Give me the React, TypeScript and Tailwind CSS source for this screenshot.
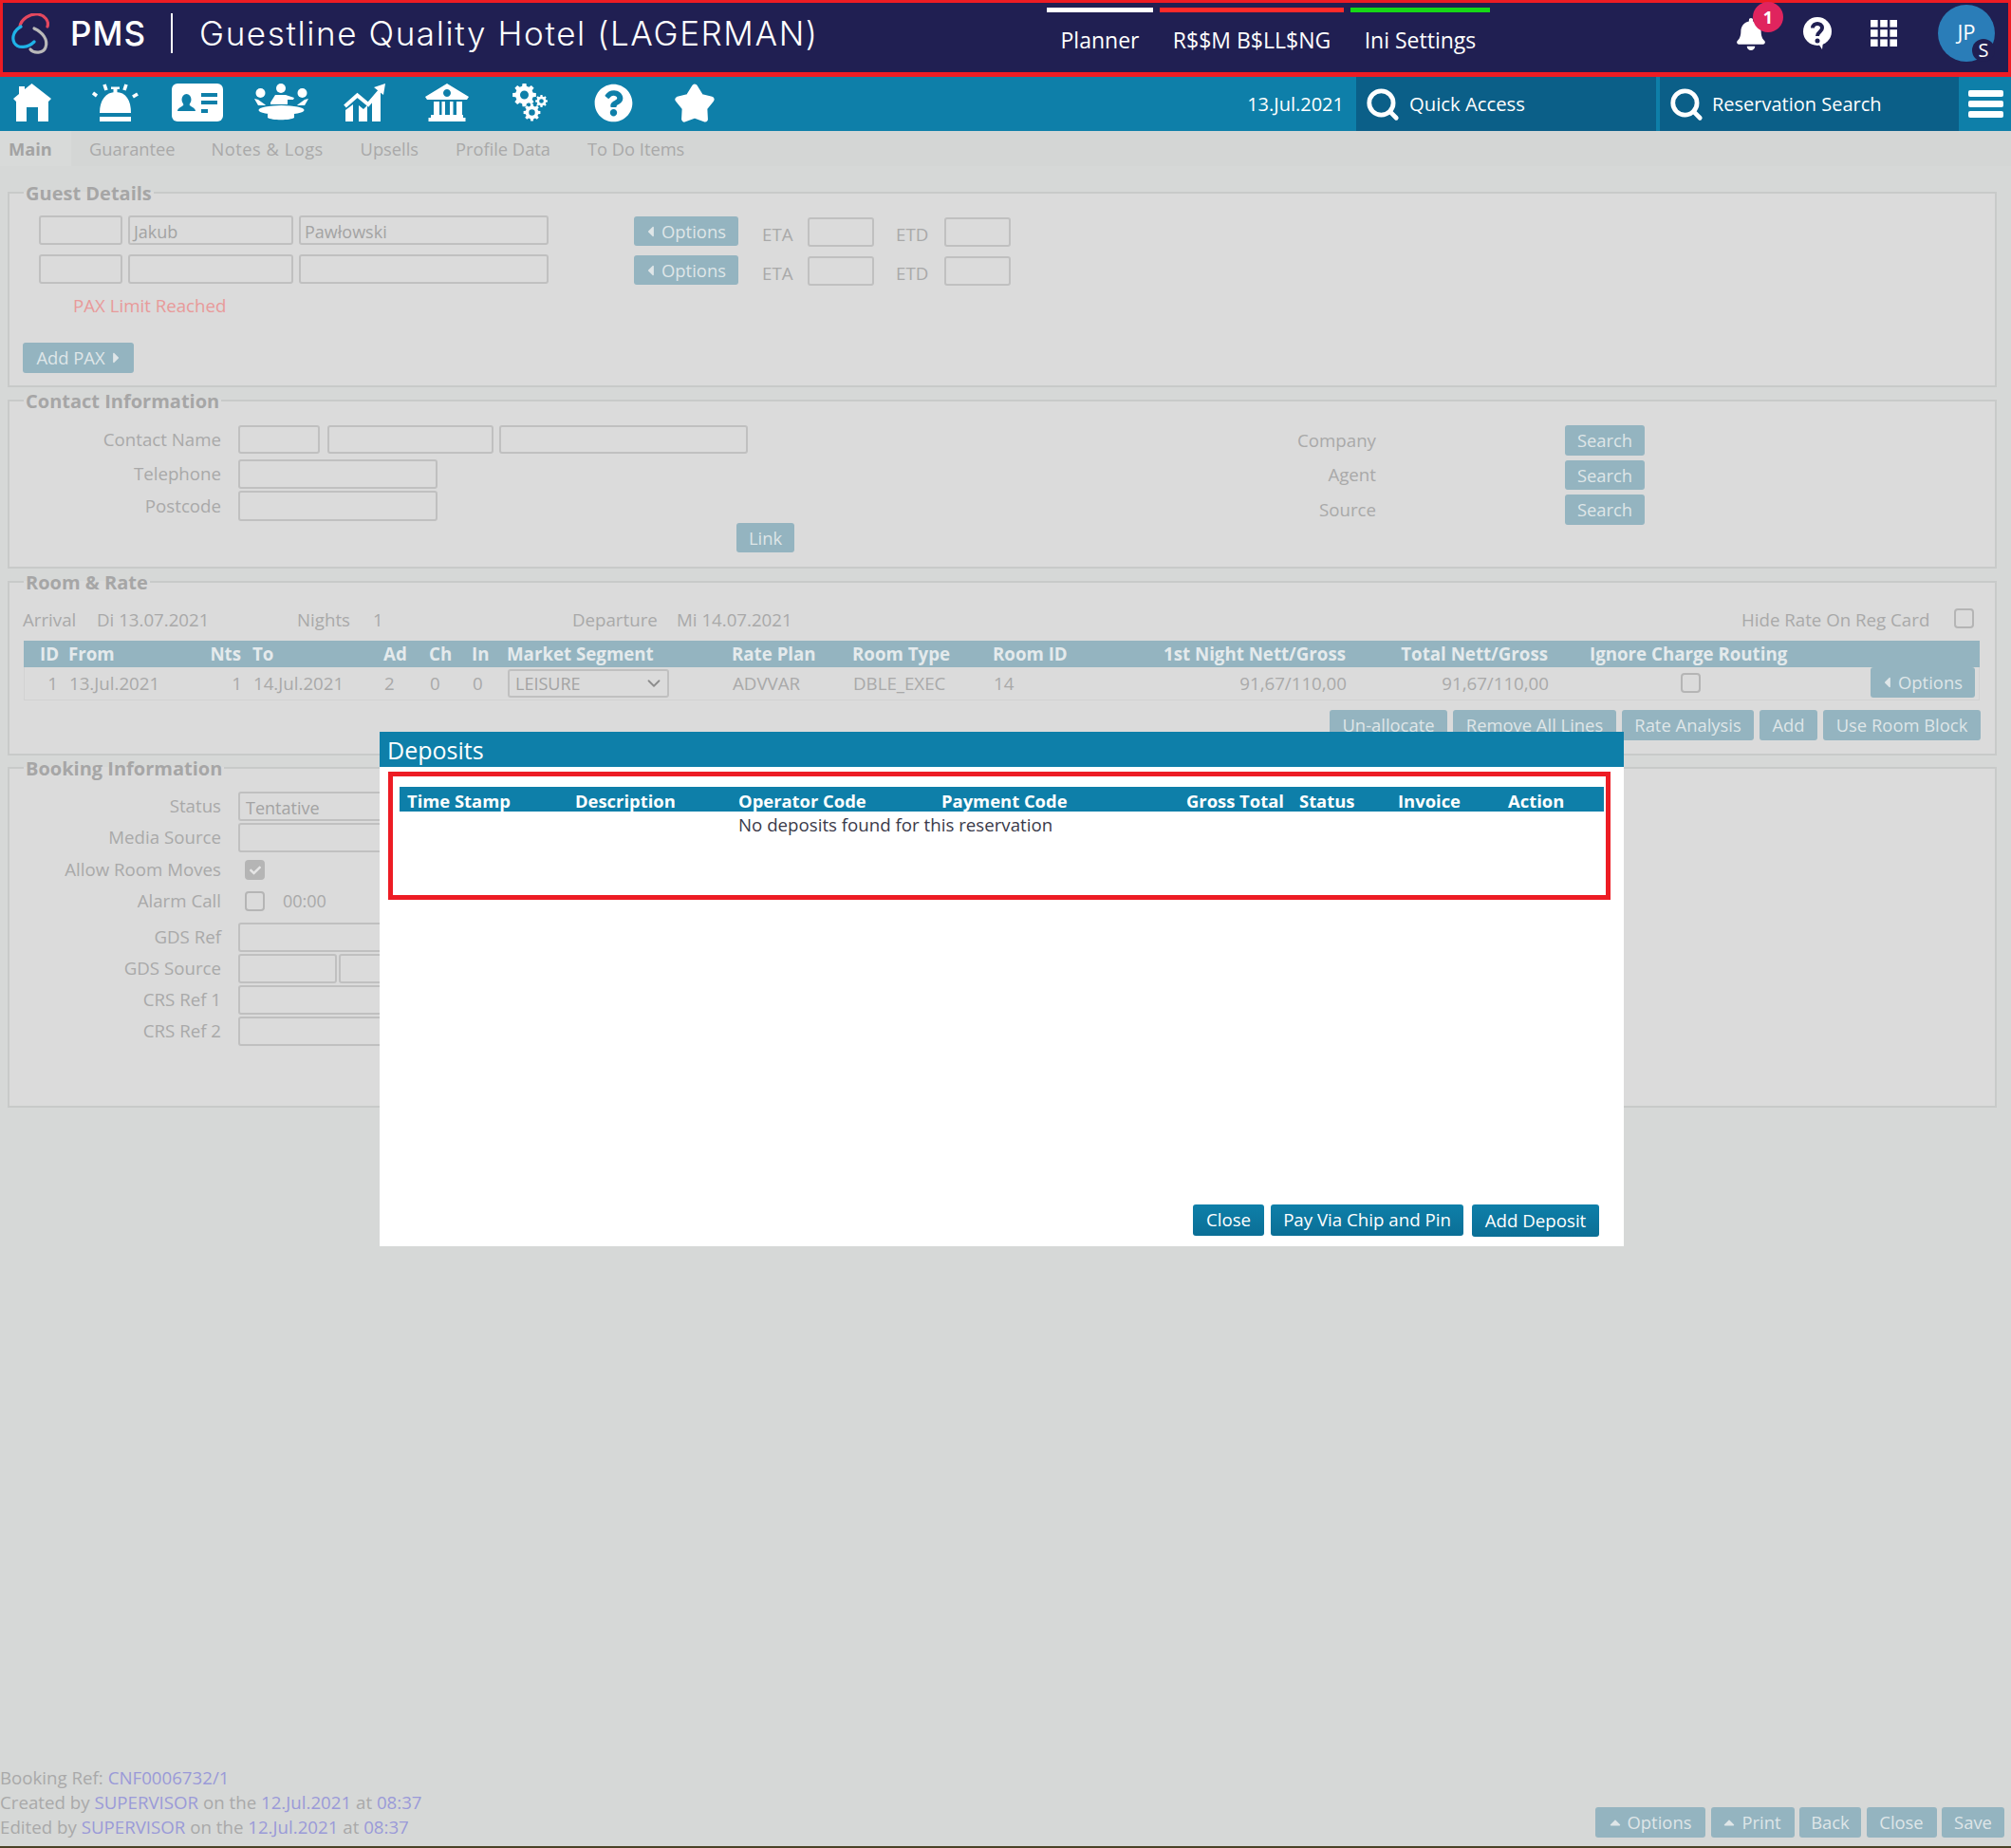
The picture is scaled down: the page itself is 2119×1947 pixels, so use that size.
import type { ReactNode } from 'react';
import {
  FaCaretLeft,
  FaCaretRight,
  FaCaretUp,
  FaCheck,
  FaQuestionCircle,
  FaBell,
} from 'react-icons/fa';
import { LuSearch, LuChevronDown } from 'react-icons/lu';

const tableCols =
  'grid grid-cols-[47px_138px_56px_138px_48px_45px_37px_237px_127px_148px_170px_202px_213px_339px_116px]';
const depositCols =
  'grid grid-cols-[177px_172px_214px_258px_119px_104px_116px_1fr]';

function Input({ className = '', children }: { className?: string; children?: ReactNode }) {
  return (
    <div
      className={`shrink-0 rounded-[3px] border-2 border-[#c0c0c0] bg-[#dbdbdb] px-1 text-[18px] leading-[30px] text-[#a3a3a3] ${className}`}
    >
      {children}
    </div>
  );
}

function Btn({ className = '', children }: { className?: string; children: ReactNode }) {
  return (
    <div
      className={`flex shrink-0 items-center justify-center gap-[7px] rounded-[3px] bg-[#94b4c0] text-[18.4px] text-[#dfe6e8] ${className}`}
    >
      {children}
    </div>
  );
}

function Check({ className = '', checked = false }: { className?: string; checked?: boolean }) {
  return (
    <div
      className={`flex h-[21px] w-[21px] shrink-0 items-center justify-center rounded-[4px] border-2 border-[#b5b5b5] ${
        checked ? 'bg-[#b5b5b5] text-[#e6e6e6]' : ''
      } ${className}`}
    >
      {checked && <FaCheck className="h-3 w-3" />}
    </div>
  );
}

function Section({ title, className = '', children }: { title: string; className?: string; children: ReactNode }) {
  return (
    <fieldset className={`ml-2 w-[2096px] border-2 border-[#c8cac9] bg-[#dbdbdb] p-0 ${className}`}>
      <legend className="ml-[15px] px-0.5 pt-[2px] text-[20px] font-bold leading-[26px] text-[#a6a6a6]">{title}</legend>
      {children}
    </fieldset>
  );
}

function FormRow({ label, className = '', children }: { label: string; className?: string; children?: ReactNode }) {
  return (
    <div className={`flex items-center ${className}`}>
      <div className="w-[223px] text-right text-[#a9a9a9]">{label}</div>
      <div className="ml-[18px] flex items-center">{children}</div>
    </div>
  );
}

function Logo() {
  return (
    <svg viewBox="0 0 40 44" className="h-[44px] w-[40px]" fill="none" strokeWidth="3.2" strokeLinecap="round">
      <path d="M9 14 C10 6 20 0 28 1 C35 2 40 8 38 14" stroke="#e5485f" />
      <path d="M10 14 C3 18 0 25 3 31 C7 38 18 36 24 30" stroke="#1fb3e8" />
      <path d="M24 16 C33 20 39 28 36 36 C34 42 24 43 20 38" stroke="#b9b9b9" />
    </svg>
  );
}

function Home() {
  return (
    <svg viewBox="0 0 41 40" className="h-[40px] w-[41px]" fill="#fff">
      <path d="M20.5 0 L41 16 L38 19 V40 H27 V25 H15 V40 H4 V19 L1 16 L7 11 V3 H13 V6 Z" />
    </svg>
  );
}

function ServiceBell() {
  return (
    <svg viewBox="0 0 50 40" className="h-[40px] w-[50px]" fill="#fff" stroke="none">
      <path d="M8 31 C8 18 14 9 25 9 C36 9 41 18 41 31 Z" />
      <rect x="22.5" y="4" width="4" height="6" />
      <rect x="20" y="3.5" width="9" height="2.5" />
      <rect x="8" y="35" width="33" height="5" />
      <path d="M1 10L5 13M13 1l2 6M36 1l-2 6M48 11l-5 3" stroke="#fff" strokeWidth="3.6" />
    </svg>
  );
}

function ContactCard() {
  return (
    <svg viewBox="0 0 54 40" className="h-[40px] w-[54px]">
      <rect width="54" height="40" rx="6" fill="#fff" />
      <g fill="#0e7fa9">
        <ellipse cx="15.5" cy="17" rx="5" ry="6" />
        <path d="M6 29 C6 25 12 25 13 21 H18 C19 25 25 25 25 29 Z" />
        <rect x="31" y="10" width="17" height="4" />
        <rect x="31" y="18" width="17" height="4" />
        <rect x="31" y="27" width="7" height="4" />
      </g>
    </svg>
  );
}

function Meeting() {
  return (
    <svg viewBox="0 0 57 40" className="h-[40px] w-[57px]" fill="#fff">
      <circle cx="6.5" cy="10" r="5" />
      <circle cx="28" cy="5" r="5" />
      <circle cx="50.5" cy="10" r="5" />
      <path d="M0 16 L4 17 L11 22 L12 23 H4 Z" />
      <path d="M57 16 L53 17 L46 22 L45 23 H53 Z" />
      <path d="M17 20 L22 12 H33 L42 15 L41 17 L35 17 L35 22 H17 Z" />
      <ellipse cx="28.5" cy="28" rx="24" ry="5" />
      <path d="M14 32 H42 V36 C38 39 18 39 14 36 Z" />
    </svg>
  );
}

function Growth() {
  return (
    <svg viewBox="0 0 44 40" className="h-[40px] w-[44px]" fill="#fff">
      <path d="M2 28 L10 22 V40 H2 Z" />
      <path d="M16 23 L21 27 L25 23 V40 H16 Z" />
      <path d="M30 17 L39 8 V40 H30 Z" />
      <path d="M1.5 24 L14.5 12.5 L26 22 L38 8" fill="none" stroke="#fff" strokeWidth="4" />
      <path d="M32 4 L44 0 L42 12 Z" />
    </svg>
  );
}

function Bank() {
  return (
    <svg viewBox="0 0 46 40" className="h-[40px] w-[46px]" fill="#fff">
      <path
        fillRule="evenodd"
        d="M23 0 L46 14 L44 17 H2 L0 14 Z M23 6 a4 4 0 1 0 0.01 0 Z"
      />
      <rect x="9" y="19" width="6" height="14" />
      <rect x="17.5" y="19" width="3.5" height="14" />
      <rect x="26" y="19" width="3.5" height="14" />
      <rect x="33" y="19" width="6" height="14" />
      <rect x="6" y="33" width="34" height="3" />
      <rect x="3.5" y="36" width="39" height="4" />
    </svg>
  );
}

function gearPath(cx: number, cy: number, r: number, teeth: number) {
  const pts: string[] = [];
  const step = (Math.PI * 2) / teeth;
  for (let i = 0; i < teeth; i++) {
    const a = i * step;
    [
      [-0.32, 0.76],
      [-0.2, 1],
      [0.2, 1],
      [0.32, 0.76],
    ].forEach(([da, rr]) => {
      const t = a + da * step;
      pts.push(`${(cx + Math.cos(t) * r * rr).toFixed(2)} ${(cy + Math.sin(t) * r * rr).toFixed(2)}`);
    });
  }
  const hole = r * 0.36;
  return `M${pts.join(' L')} Z M${cx - hole} ${cy} a${hole} ${hole} 0 1 0 ${hole * 2} 0 a${hole} ${hole} 0 1 0 ${-hole * 2} 0 Z`;
}

function Gears() {
  return (
    <svg viewBox="0 0 38 40" className="h-[40px] w-[38px]" fill="#fff" fillRule="evenodd">
      <path d={gearPath(12.5, 12, 12.5, 8)} />
      <path d={gearPath(30.5, 18.5, 6.5, 8)} />
      <path d={gearPath(20.5, 30.5, 9, 8)} />
    </svg>
  );
}

function RoundStar() {
  return (
    <svg viewBox="0 0 43 40" className="h-[41px] w-[44px]" fill="#fff" stroke="#fff" strokeWidth="6" strokeLinejoin="round">
      <path d="M21.5 3.5 L27.7 13.5 L38.6 16.4 L31.5 25.2 L32.1 36.6 L21.5 32.5 L10.9 36.6 L11.5 25.2 L4.4 16.4 L15.3 13.5 Z" />
    </svg>
  );
}

function HelpBubble() {
  return (
    <svg viewBox="0 0 30 34" className="h-[34px] w-[30px]">
      <circle cx="15" cy="15" r="15" fill="#fff" />
      <path d="M16 28 L20 34 L21 26 Z" fill="#fff" />
      <path d="M10 11.5 C10 5.5 20 5.5 20 11.5 C20 15.5 15 15.5 15 20" fill="none" stroke="#201f52" strokeWidth="4" />
      <circle cx="15" cy="25" r="2.5" fill="#201f52" />
    </svg>
  );
}

function AppsGrid() {
  const cells = [0, 10.2, 20.4];
  return (
    <svg viewBox="0 0 28 28" className="h-[28px] w-[28px]" fill="#fff">
      {cells.map((y) => cells.map((x) => <rect key={`${x}-${y}`} x={x} y={y} width="7.6" height="7.6" />))}
    </svg>
  );
}

const navIcons = [
  { key: 'home', ml: 'ml-[13px]', node: <Home /> },
  { key: 'bell', ml: 'ml-[43px]', node: <ServiceBell /> },
  { key: 'card', ml: 'ml-[34px]', node: <ContactCard /> },
  { key: 'meet', ml: 'ml-[33px]', node: <Meeting /> },
  { key: 'chart', ml: 'ml-[37px]', node: <Growth /> },
  { key: 'bank', ml: 'ml-[42px]', node: <Bank /> },
  { key: 'cogs', ml: 'ml-[46px]', node: <Gears /> },
  { key: 'help', ml: 'ml-[48px]', node: <FaQuestionCircle className="h-[41px] w-[41px]" /> },
  { key: 'star', ml: 'ml-[43px]', node: <RoundStar /> },
];

export default function App() {
  return (
    <div className="relative flex h-[1947px] w-[2119px] flex-col overflow-hidden bg-[#d6d8d7] font-['Open_Sans',sans-serif] text-[18.7px]">
      {/* top bar */}
      <header className="flex h-[81px] items-center border-[3px] border-b-[5px] border-[#ed1c24] bg-[#201f52] text-white">
        <div className="ml-[9px] flex h-[73px] items-start pt-[11px]">
          <Logo />
        </div>
        <div className="ml-[22px] mt-[-9px] font-['Inter',sans-serif] text-[35px] font-medium tracking-[1px]">PMS</div>
        <div className="ml-[26px] mt-[-9px] h-[42px] w-0.5 bg-white" />
        <div className="ml-[28px] mt-[-9px] whitespace-nowrap font-['Inter',sans-serif] text-[35px] font-light tracking-[1.6px]">
          Guestline Quality Hotel (LAGERMAN)
        </div>
        <nav className="absolute left-[1103px] top-[8px] flex gap-[7px] text-[23px] leading-[32px]">
          <div className="w-[112px] border-t-[5px] border-white pt-[13px] text-center">Planner</div>
          <div className="w-[194px] border-t-[5px] border-[#ff2a2a] pt-[13px] text-center">R$$M B$LL$NG</div>
          <div className="w-[147px] border-t-[5px] border-[#17d817] pt-[13px] text-center">Ini Settings</div>
        </nav>
        <div className="absolute left-[1830px] top-[19px]">
          <FaBell className="h-[34px] w-[30px]" />
          <div className="absolute left-[17px] top-[-17px] flex h-[32px] w-[32px] items-center justify-center rounded-full bg-[#e0245e] text-[18px] font-bold">
            1
          </div>
        </div>
        <div className="absolute left-[1900px] top-[18px]">
          <HelpBubble />
        </div>
        <div className="absolute left-[1971px] top-[21px]">
          <AppsGrid />
        </div>
        <div className="absolute left-[2042px] top-[5px] h-[60px] w-[60px] rounded-full bg-[#2a7db8] pt-[14px] text-center text-[22px] leading-[28px]">
          JP
          <div className="absolute left-[36px] top-[36px] flex h-[24px] w-[24px] items-center justify-center rounded-full bg-[#201f52] text-[20px]">
            S
          </div>
        </div>
      </header>

      {/* icon bar */}
      <div className="flex h-[57px] items-center bg-[#0e7fa9] text-white">
        {navIcons.map((icon) => (
          <div key={icon.key} className={`mb-[3px] ${icon.ml}`}>
            {icon.node}
          </div>
        ))}
        <div className="ml-auto text-[20px]">13.Jul.2021</div>
        <div className="ml-[13px] flex h-full w-[316px] items-center bg-[#0b5f88] pl-[9px]">
          <LuSearch className="h-[38px] w-[38px] stroke-[3]" />
          <span className="ml-[9px] text-[20.3px]">Quick Access</span>
        </div>
        <div className="ml-[4px] flex h-full w-[315px] items-center bg-[#0b5f88] pl-[9px]">
          <LuSearch className="h-[38px] w-[38px] stroke-[3]" />
          <span className="ml-[8px] text-[20px]">Reservation Search</span>
        </div>
        <div className="ml-[10px] mr-[8px] flex w-[37px] flex-col gap-[4px]">
          <div className="h-[7px] rounded-[2px] bg-white" />
          <div className="h-[7px] rounded-[2px] bg-white" />
          <div className="h-[7px] rounded-[2px] bg-white" />
        </div>
      </div>

      {/* tabs */}
      <div className="flex h-[37px] items-center bg-[#d4d6d5] text-[18.3px] text-[#a9a9a9]">
        <div className="flex h-full w-[75px] items-center bg-[#d8dad9] pl-[9px] font-bold text-[#a3a3a3]">Main</div>
        <div className="ml-[19px]">Guarantee</div>
        <div className="ml-[38px] w-[119px] whitespace-nowrap tracking-[0.5px]">Notes &amp; Logs</div>
        <div className="ml-[38px]">Upsells</div>
        <div className="ml-[39px]">Profile Data</div>
        <div className="ml-[39px]">To Do Items</div>
      </div>

      <Section title="Guest Details" className="mt-[14px] h-[219px]">
        <div className="ml-[31px] mt-[10px] flex">
          <Input className="h-[31px] w-[88px]" />
          <Input className="ml-[6px] h-[31px] w-[174px]">Jakub</Input>
          <Input className="ml-[6px] h-[31px] w-[263px]">Pawłowski</Input>
          <Btn className="ml-[90px] mt-[1px] h-[31px] w-[110px]">
            <FaCaretLeft className="h-[18px] w-[9px]" /> Options
          </Btn>
          <div className="ml-[25px] mt-[6px] w-[48px] text-[#a9a9a9]">ETA</div>
          <Input className="mt-[2px] h-[31px] w-[70px]" />
          <div className="ml-[23px] mt-[6px] w-[51px] text-[#a9a9a9]">ETD</div>
          <Input className="mt-[2px] h-[31px] w-[70px]" />
        </div>
        <div className="ml-[31px] mt-[7px] flex">
          <Input className="h-[31px] w-[88px]" />
          <Input className="ml-[6px] h-[31px] w-[174px]" />
          <Input className="ml-[6px] h-[31px] w-[263px]" />
          <Btn className="ml-[90px] mt-[1px] h-[31px] w-[110px]">
            <FaCaretLeft className="h-[18px] w-[9px]" /> Options
          </Btn>
          <div className="ml-[25px] mt-[6px] w-[48px] text-[#a9a9a9]">ETA</div>
          <Input className="mt-[2px] h-[31px] w-[70px]" />
          <div className="ml-[23px] mt-[6px] w-[51px] text-[#a9a9a9]">ETD</div>
          <Input className="mt-[2px] h-[31px] w-[70px]" />
        </div>
        <div className="ml-[67px] mt-[8px] leading-[24px] text-[#e89a9a]">PAX Limit Reached</div>
        <Btn className="ml-[14px] mt-[27px] h-[32px] w-[117px]">
          Add PAX <FaCaretRight className="h-[18px] w-[9px]" />
        </Btn>
      </Section>

      <Section title="Contact Information" className="h-[191px]">
        <div className="flex">
          <div className="mt-[12px] w-[1290px]">
            <FormRow label="Contact Name" className="h-[30px]">
              <Input className="h-[30px] w-[86px]" />
              <Input className="ml-[8px] h-[30px] w-[175px]" />
              <Input className="ml-[6px] h-[30px] w-[262px]" />
            </FormRow>
            <FormRow label="Telephone" className="mt-[6px] h-[31px]">
              <Input className="h-[31px] w-[210px]" />
            </FormRow>
            <FormRow label="Postcode" className="mt-[2px] h-[32px]">
              <Input className="h-[32px] w-[210px]" />
            </FormRow>
            <Btn className="ml-[766px] mt-[2px] h-[31px] w-[61px]">Link</Btn>
          </div>
          <div className="mt-[12px] text-[#a9a9a9]">
            <div className="flex h-[32px] items-center">
              <div className="w-[150px] text-right">Company</div>
              <Btn className="ml-[199px] h-[32px] w-[84px]">Search</Btn>
            </div>
            <div className="mt-[5px] flex h-[31px] items-center">
              <div className="w-[150px] text-right">Agent</div>
              <Btn className="ml-[199px] h-[31px] w-[84px]">Search</Btn>
            </div>
            <div className="mt-[5px] flex h-[32px] items-center">
              <div className="w-[150px] text-right">Source</div>
              <Btn className="ml-[199px] h-[32px] w-[84px]">Search</Btn>
            </div>
          </div>
        </div>
      </Section>

      <Section title="Room & Rate" className="h-[197px]">
        <div className="ml-[14px] mt-[8px] flex h-[36px] items-center text-[#a9a9a9]">
          <div className="w-[78px]">Arrival</div>
          <div className="w-[211px]">Di 13.07.2021</div>
          <div className="w-[80px]">Nights</div>
          <div className="w-[210px]">1</div>
          <div className="w-[110px]">Departure</div>
          <div className="w-[1122px]">Mi 14.07.2021</div>
          <div className="w-[224px] whitespace-nowrap">Hide Rate On Reg Card</div>
          <Check className="mb-1" />
        </div>
        <div className="ml-[15px] mt-[4px] w-[2061px]">
          <div className={`${tableCols} h-[28px] items-center whitespace-nowrap bg-[#94b4c0] font-bold leading-[28px] text-[#e4eaec]`}>
            <div className="pr-[10px] text-right">ID</div>
            <div>From</div>
            <div className="pr-[12px] text-right">Nts</div>
            <div>To</div>
            <div>Ad</div>
            <div>Ch</div>
            <div>In</div>
            <div>Market Segment</div>
            <div>Rate Plan</div>
            <div>Room Type</div>
            <div>Room ID</div>
            <div className="text-right">1st Night Nett/Gross</div>
            <div className="text-right">Total Nett/Gross</div>
            <div className="pl-[44px]">Ignore Charge Routing</div>
            <div />
          </div>
          <div className={`${tableCols} h-[35px] items-center border border-t-0 border-[#d2d2d2] text-[#a9a9a9]`}>
            <div className="pr-[12px] text-right">1</div>
            <div>13.Jul.2021</div>
            <div className="pr-[12px] text-right">1</div>
            <div>14.Jul.2021</div>
            <div>2</div>
            <div>0</div>
            <div>0</div>
            <div>
              <div className="flex h-[30px] w-[170px] items-center justify-between rounded-[3px] border-2 border-[#c0c0c0] pl-[6px] pr-[3px] text-[18px] leading-none text-[#a3a3a3]">
                LEISURE <LuChevronDown className="h-[22px] w-[22px] text-[#8d8d8d]" />
              </div>
            </div>
            <div>ADVVAR</div>
            <div>DBLE_EXEC</div>
            <div>14</div>
            <div className="text-right">91,67/110,00</div>
            <div className="text-right">91,67/110,00</div>
            <div className="pl-[139px]">
              <Check className="mb-[2px]" />
            </div>
            <div>
              <Btn className="mb-[2px] h-[32px] w-[110px]">
                <FaCaretLeft className="h-[18px] w-[9px]" /> Options
              </Btn>
            </div>
          </div>
        </div>
        <div className="ml-[1391px] mt-[10px] flex gap-[6px]">
          <Btn className="h-[32px] w-[124px]">Un-allocate</Btn>
          <Btn className="h-[32px] w-[172px]">Remove All Lines</Btn>
          <Btn className="h-[32px] w-[139px]">Rate Analysis</Btn>
          <Btn className="h-[32px] w-[61px]">Add</Btn>
          <Btn className="h-[32px] w-[166px]">Use Room Block</Btn>
        </div>
      </Section>

      <Section title="Booking Information" className="mt-[-1px] h-[372px]">
        <div className="mt-[11px]">
          <FormRow label="Status" className="h-[31px]">
            <Input className="h-[31px] w-[200px] pl-[6px]">Tentative</Input>
          </FormRow>
          <FormRow label="Media Source" className="mt-[2px] h-[31px]">
            <Input className="h-[31px] w-[200px]" />
          </FormRow>
          <FormRow label="Allow Room Moves" className="mt-[2px] h-[33px]">
            <Check checked className="ml-[7px]" />
          </FormRow>
          <FormRow label="Alarm Call" className="h-[33px]">
            <Check className="ml-[7px]" />
            <span className="ml-[19px] text-[18px] text-[#a9a9a9]">00:00</span>
          </FormRow>
          <FormRow label="GDS Ref" className="mt-[6px] h-[31px]">
            <Input className="h-[31px] w-[200px]" />
          </FormRow>
          <FormRow label="GDS Source" className="mt-[2px] h-[31px]">
            <Input className="h-[31px] w-[104px]" />
            <Input className="ml-[2px] h-[31px] w-[100px]" />
          </FormRow>
          <FormRow label="CRS Ref 1" className="mt-[2px] h-[31px]">
            <Input className="h-[31px] w-[200px]" />
          </FormRow>
          <FormRow label="CRS Ref 2" className="mt-[2px] h-[31px]">
            <Input className="h-[31px] w-[200px]" />
          </FormRow>
        </div>
      </Section>

      {/* footer */}
      <footer className="mt-auto flex items-end justify-between">
        <div className="mb-[7px] leading-[26px] text-[#a9a9a9]">
          <div>
            Booking Ref: <span className="text-[#9a9ad8]">CNF0006732/1</span>
          </div>
          <div>
            Created by <span className="text-[#9a9ad8]">SUPERVISOR</span> on the{' '}
            <span className="text-[#9a9ad8]">12.Jul.2021</span> at <span className="text-[#9a9ad8]">08:37</span>
          </div>
          <div>
            Edited by <span className="text-[#9a9ad8]">SUPERVISOR</span> on the{' '}
            <span className="text-[#9a9ad8]">12.Jul.2021</span> at <span className="text-[#9a9ad8]">08:37</span>
          </div>
        </div>
        <div className="mb-[9px] mr-[7px] flex gap-[5.5px]">
          <Btn className="h-[32px] w-[116px]">
            <FaCaretUp className="h-[18px] w-[12px]" /> Options
          </Btn>
          <Btn className="h-[32px] w-[88px]">
            <FaCaretUp className="h-[18px] w-[12px]" /> Print
          </Btn>
          <Btn className="h-[32px] w-[65px]">Back</Btn>
          <Btn className="h-[32px] w-[74px]">Close</Btn>
          <Btn className="h-[32px] w-[66px]">Save</Btn>
        </div>
      </footer>
      <div className="h-[2px] bg-[#4a4226]" />

      {/* deposits modal */}
      <div className="absolute left-[400px] top-[771px] flex h-[542px] w-[1311px] flex-col bg-white">
        <div className="h-[37px] bg-[#0e7fa9] pl-[8px] text-[25px] leading-[38px] text-white">Deposits</div>
        <div className="ml-[9px] mt-[5px] h-[135px] w-[1288px] border-[5px] border-[#ed1c24] pl-[7px] pr-[2px] pt-[11px]">
          <div className={`${depositCols} h-[26px] items-center bg-[#0e7fa9] pl-[8px] pt-[1px] text-[18.4px] font-bold text-white`}>
            <div>Time Stamp</div>
            <div>Description</div>
            <div>Operator Code</div>
            <div>Payment Code</div>
            <div className="whitespace-nowrap">Gross Total</div>
            <div>Status</div>
            <div>Invoice</div>
            <div>Action</div>
          </div>
          <div className="ml-[349px] pl-[8px] pt-[1px] leading-[26px] text-[#3a3a4a]">
            No deposits found for this reservation
          </div>
        </div>
        <div className="mb-[10px] mr-[26px] mt-auto flex justify-end">
          <div className="flex h-[33px] w-[75px] items-center justify-center rounded-[3px] bg-gradient-to-b from-[#0e7fa9] to-[#0b6f96] text-white">
            Close
          </div>
          <div className="ml-[7px] flex h-[33px] w-[203px] items-center justify-center rounded-[3px] bg-gradient-to-b from-[#0e7fa9] to-[#0b6f96] text-white">
            Pay Via Chip and Pin
          </div>
          <div className="ml-[9px] flex h-[34px] w-[134px] items-center justify-center rounded-[3px] bg-gradient-to-b from-[#0e7fa9] to-[#0b6f96] text-white">
            Add Deposit
          </div>
        </div>
      </div>
    </div>
  );
}
